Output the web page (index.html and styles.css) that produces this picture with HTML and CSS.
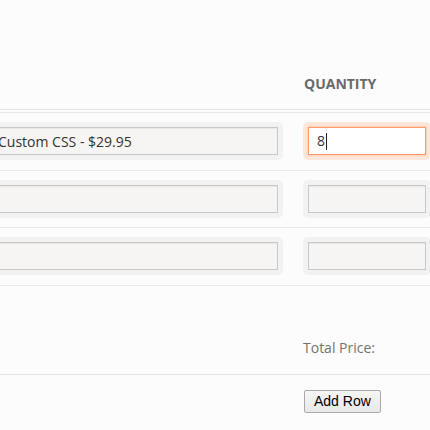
FILE: index.html
```html
<!DOCTYPE html>
<html>
<head>
<meta charset="utf-8">
<link rel="stylesheet" href="styles.css">
</head>
<body>
<div class="form">
  <div class="head grid">
    <div></div>
    <div class="th">Quantity</div>
  </div>
  <div class="row grid first">
    <div class="cell"><input class="inp" type="text" value="Custom CSS - $29.95"></div>
    <div class="cell focus"><div class="inp fake">8<span class="caret"></span></div></div>
  </div>
  <div class="row grid mid">
    <div class="cell"><input class="inp" type="text" value=""></div>
    <div class="cell"><input class="inp" type="text" value=""></div>
  </div>
  <div class="row grid">
    <div class="cell"><input class="inp" type="text" value=""></div>
    <div class="cell"><input class="inp" type="text" value=""></div>
  </div>
  <div class="total grid">
    <div></div>
    <div class="label">Total Price:</div>
  </div>
  <div class="actions grid">
    <div></div>
    <div><button class="btn" type="button">Add Row</button></div>
  </div>
</div>
</body>
</html>
```

FILE: styles.css
```css
html, body {
  margin: 0;
  padding: 0;
  background: #fcfcfc;
  overflow: hidden;
  width: 430px;
  height: 430px;
}

.form {
  margin-left: -16px;
  width: 447px;
  font-family: "Open Sans", sans-serif;
}

.grid {
  display: grid;
  grid-template-columns: 1fr 128px;
  column-gap: 20px;
}

.head {
  height: 110px;
  box-sizing: border-box;
  padding-top: 75px;
  border-bottom: 1px solid #e4e4e4;
  margin-bottom: 2px;
}

.th {
  font-size: 14px;
  line-height: 18px;
  font-weight: 700;
  text-transform: uppercase;
  color: #6a6a6a;
  padding-left: 1px;
}

.row {
  padding: 9px 0 10px;
  border-bottom: 1px solid #e8e8e8;
}

.row.mid {
  padding-bottom: 9px;
}

.row.first {
  border-top: 1px solid #e8e8e8;
}

.cell {
  background: #f2f2f2;
  border-radius: 5px;
  padding: 5px;
}

.cell.focus {
  background: #fde6da;
}

.inp {
  display: block;
  box-sizing: border-box;
  width: 100%;
  height: 28px;
  margin: 0;
  border: 1px solid #c8c8c8;
  background: #f6f5f4;
  box-shadow: inset 0 1px 1px rgba(0, 0, 0, 0.06);
  padding: 0 8px;
  font-family: "Open Sans", sans-serif;
  font-size: 14px;
  color: #333;
  outline: none;
}

.fake {
  border: 1px solid #ff9a6a;
  background: #ffffff;
  box-shadow: 0 0 2px #ffb08a;
  line-height: 26px;
  display: flex;
  align-items: center;
}

.caret {
  display: inline-block;
  width: 1px;
  height: 17px;
  background: #222;
  margin-left: 1px;
}

.total {
  padding: 52px 0 16px;
  border-bottom: 1px solid #e4e4e4;
}

.label {
  font-size: 14px;
  line-height: 20px;
  color: #737373;
}

.actions {
  padding-top: 14px;
}

.btn {
  margin-left: 1px;
  height: 23px;
  padding: 0 9px;
  font-family: "Liberation Sans", Arial, sans-serif;
  font-size: 14px;
  color: #000;
  background: linear-gradient(#f6f6f6, #e8e8e8);
  border: 1px solid #a9a9a9;
  border-radius: 2px;
}
```
